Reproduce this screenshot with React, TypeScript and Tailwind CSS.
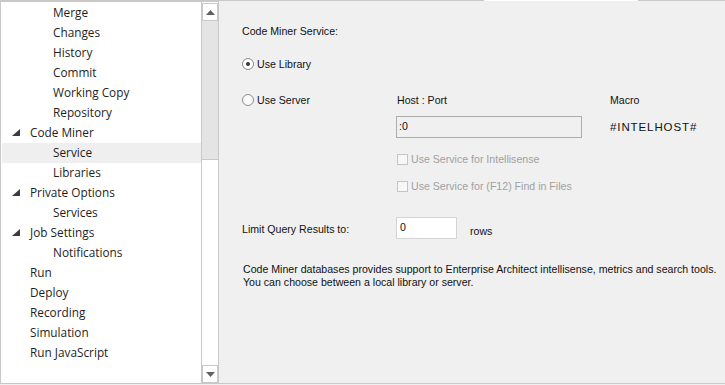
import React from "react";

type Item = { label: string; level: 0 | 1; expanded?: boolean; selected?: boolean };

const items: Item[] = [
  { label: "Merge", level: 1 },
  { label: "Changes", level: 1 },
  { label: "History", level: 1 },
  { label: "Commit", level: 1 },
  { label: "Working Copy", level: 1 },
  { label: "Repository", level: 1 },
  { label: "Code Miner", level: 0, expanded: true },
  { label: "Service", level: 1, selected: true },
  { label: "Libraries", level: 1 },
  { label: "Private Options", level: 0, expanded: true },
  { label: "Services", level: 1 },
  { label: "Job Settings", level: 0, expanded: true },
  { label: "Notifications", level: 1 },
  { label: "Run", level: 0 },
  { label: "Deploy", level: 0 },
  { label: "Recording", level: 0 },
  { label: "Simulation", level: 0 },
  { label: "Run JavaScript", level: 0 },
];

function Triangle() {
  return (
    <svg width="8" height="8" viewBox="0 0 8 8" className="block">
      <polygon points="8,0 8,7 0,7" fill="#3c3c3c" />
    </svg>
  );
}

function Tree() {
  return (
    <div className="flex-1 bg-white pt-px" style={{ fontFamily: '"Open Sans", "Noto Sans", sans-serif' }}>
      {items.map((it) => (
        <div
          key={it.label}
          className={`h-[20px] flex items-center text-[11.8px] text-[#1e1e1e] ${it.selected ? "bg-[#efefef]" : ""}`}
        >
          {it.level === 0 ? (
            <>
              <div className="w-[10px]" />
              <div className="w-[18px] flex items-center">{it.expanded ? <Triangle /> : null}</div>
              <span>{it.label}</span>
            </>
          ) : (
            <>
              <div className="w-[51px]" />
              <span>{it.label}</span>
            </>
          )}
        </div>
      ))}
    </div>
  );
}

function Scrollbar() {
  return (
    <div className="w-[17px] flex flex-col border-l border-[#c8c8c8] bg-white">
      <div className="h-[18px] border border-[#c8c8c8] bg-white flex items-center justify-center mt-px">
        <svg width="9" height="5" viewBox="0 0 9 5">
          <polygon points="4.5,0 9,5 0,5" fill="#606060" />
        </svg>
      </div>
      <div className="h-[138px] bg-[#e4e4e4]" />
      <div className="flex-1 border-t border-[#c8c8c8] bg-white" />
      <div className="h-[18px] border border-[#c8c8c8] bg-white flex items-center justify-center">
        <svg width="9" height="5" viewBox="0 0 9 5">
          <polygon points="0,0 9,0 4.5,5" fill="#606060" />
        </svg>
      </div>
    </div>
  );
}

function Radio({ checked }: { checked?: boolean }) {
  return (
    <div className="w-[12px] h-[12px] rounded-full border border-[#8c8c8c] bg-[#fbfbfb] flex items-center justify-center">
      {checked ? <div className="w-[4px] h-[4px] rounded-full bg-[#333333]" /> : null}
    </div>
  );
}

function DisabledCheck({ label }: { label: string }) {
  return (
    <div className="h-[14px] flex items-center gap-[3px] text-[#a0a0a0]">
      <div className="w-[11px] h-[11px] border border-[#c4c4c4] bg-[#f7f7f7]" />
      <span>{label}</span>
    </div>
  );
}

export default function App() {
  return (
    <div className="w-[725px] h-[385px] bg-[#f0f0f0] flex flex-col overflow-hidden">
      <div className="h-px flex bg-[#c8c8c8]">
        <div className="ml-[484px] w-[154px] bg-white" />
      </div>
      <div className="flex-1 flex min-h-0">
        <div className="w-[219px] flex border-l border-t border-r border-[#c8c8c8]">
          <div className="w-[1px] bg-white" />
          <Tree />
          <Scrollbar />
        </div>
        <div
          className="flex-1 pl-[23px] text-[10.6px] text-[#111111] leading-[14px]"
          style={{ fontFamily: '"Liberation Sans", Arial, sans-serif' }}
        >
          <div className="mt-[23px] h-[14px] flex items-center">Code Miner Service:</div>
          <div className="mt-[19px] h-[14px] flex items-center gap-[3px]">
            <Radio checked />
            <span>Use Library</span>
          </div>
          <div className="mt-[22px] h-[14px] flex items-center">
            <div className="w-[155px] flex items-center gap-[3px]">
              <Radio />
              <span>Use Server</span>
            </div>
            <div className="w-[213px]">Host : Port</div>
            <div>Macro</div>
          </div>
          <div className="mt-[9px] h-[22px] flex items-center">
            <div className="w-[154px]" />
            <div className="w-[186px] h-[22px] border border-[#adadad] bg-[#f0f0f0] px-[2px] pt-[2px]">:0</div>
            <div className="ml-[28px] text-[11.5px] tracking-[0.9px]">#INTELHOST#</div>
          </div>
          <div className="mt-[14px] pl-[155px]">
            <DisabledCheck label="Use Service for Intellisense" />
          </div>
          <div className="mt-[13px] pl-[155px]">
            <DisabledCheck label="Use Service for (F12) Find in Files" />
          </div>
          <div className="mt-[24px] h-[22px] flex items-center">
            <div className="w-[154px] pt-[1px]">Limit Query Results to:</div>
            <div className="w-[61px] h-[22px] border border-[#d4d4d4] bg-white px-[3px] pt-[2px]">0</div>
            <div className="ml-[13px] pt-[5px]">rows</div>
          </div>
          <div className="mt-[24px] leading-[13px] pl-px whitespace-nowrap">
            <div>Code Miner databases provides support to Enterprise Architect intellisense, metrics and search tools.</div>
            <div>You can choose between a local library or server.</div>
          </div>
        </div>
      </div>
      <div className="h-px bg-[#c8c8c8]" />
      <div className="h-px" />
    </div>
  );
}
